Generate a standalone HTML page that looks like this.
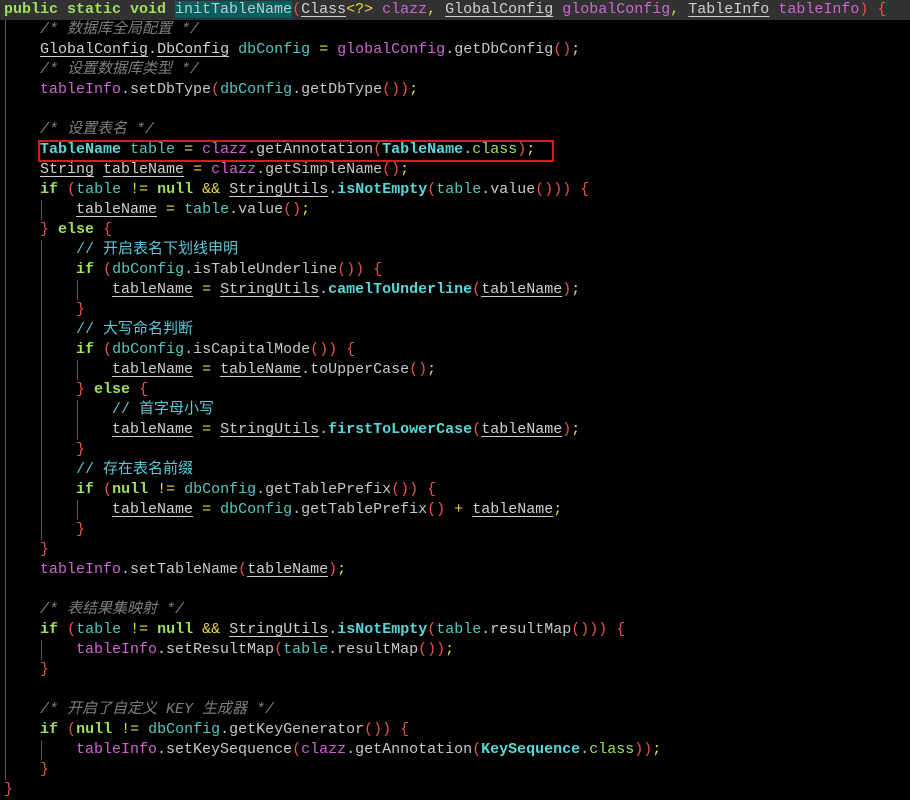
<!DOCTYPE html>
<html><head><meta charset="utf-8"><style>
html,body{margin:0;padding:0;background:#000;width:910px;height:800px;overflow:hidden}
.l{position:absolute;left:4px;height:20px;line-height:20px;white-space:pre;font-family:"Liberation Mono","Noto Sans CJK SC",monospace;font-size:15px;color:#c8c8c8}
.k{color:#9fe05a;font-weight:bold}
.c{color:#7f7f7f;font-style:italic}
.lc{color:#5cc8d8}
.v{color:#52c8c0}
.p{color:#d064d4}
.u{color:#d0d0d0;text-decoration:underline;text-underline-offset:3px}
.t{color:#58d8d8;font-weight:bold}
.r{color:#e8524a}
.y{color:#e8d84a}
.g{position:absolute;width:1px;background:#555}
</style></head><body>
<div style="position:absolute;left:0;top:0;width:910px;height:20px;background:#323232"></div>
<div class="g" style="left:5px;top:20px;height:760px"></div>
<div class="g" style="left:41px;top:200px;height:20px"></div>
<div class="g" style="left:41px;top:240px;height:300px"></div>
<div class="g" style="left:41px;top:640px;height:20px"></div>
<div class="g" style="left:41px;top:740px;height:20px"></div>
<div class="g" style="left:77px;top:280px;height:20px"></div>
<div class="g" style="left:77px;top:360px;height:20px"></div>
<div class="g" style="left:77px;top:400px;height:40px"></div>
<div class="g" style="left:77px;top:500px;height:20px"></div>
<div style="position:absolute;left:38px;top:140px;width:512px;height:18px;border:2px solid #e01818"></div>

<div class="l" style="top:0"><span class="k">public static void </span><span style="background:#006060">initTableName</span><span class="r">(</span><span class="u">Class</span><span class="y">&lt;?&gt;</span> <span class="p">clazz</span><span class="y">,</span> <span class="u">GlobalConfig</span> <span class="p">globalConfig</span><span class="y">,</span> <span class="u">TableInfo</span> <span class="p">tableInfo</span><span class="r">) {</span></div>
<div class="l c" style="top:20px">    /* 数据库全局配置 */</div>
<div class="l" style="top:40px">    <span class="u">GlobalConfig</span>.<span class="u">DbConfig</span> <span class="v">dbConfig</span> <span class="y">=</span> <span class="p">globalConfig</span>.getDbConfig<span class="r">()</span><span class="y">;</span></div>
<div class="l c" style="top:60px">    /* 设置数据库类型 */</div>
<div class="l" style="top:80px">    <span class="p">tableInfo</span>.setDbType<span class="r">(</span><span class="v">dbConfig</span>.getDbType<span class="r">())</span><span class="y">;</span></div>
<div class="l c" style="top:120px">    /* 设置表名 */</div>
<div class="l" style="top:140px">    <span class="t">TableName</span> <span class="v">table</span> <span class="y">=</span> <span class="p">clazz</span>.getAnnotation<span class="r">(</span><span class="t">TableName</span>.<span class="k" style="font-weight:normal">class</span><span class="r">)</span><span class="y">;</span></div>
<div class="l" style="top:160px">    <span class="u">String</span> <span class="u">tableName</span> <span class="y">=</span> <span class="p">clazz</span>.getSimpleName<span class="r">()</span><span class="y">;</span></div>
<div class="l" style="top:180px">    <span class="k">if</span> <span class="r">(</span><span class="v">table</span> <span class="y">!=</span> <span class="k">null</span> <span class="y">&amp;&amp;</span> <span class="u">StringUtils</span>.<span class="t">isNotEmpty</span><span class="r">(</span><span class="v">table</span>.value<span class="r">())) {</span></div>
<div class="l" style="top:200px">        <span class="u">tableName</span> <span class="y">=</span> <span class="v">table</span>.value<span class="r">()</span><span class="y">;</span></div>
<div class="l" style="top:220px">    <span class="r">}</span> <span class="k">else</span> <span class="r">{</span></div>
<div class="l lc" style="top:240px">        // 开启表名下划线申明</div>
<div class="l" style="top:260px">        <span class="k">if</span> <span class="r">(</span><span class="v">dbConfig</span>.isTableUnderline<span class="r">()) {</span></div>
<div class="l" style="top:280px">            <span class="u">tableName</span> <span class="y">=</span> <span class="u">StringUtils</span>.<span class="t">camelToUnderline</span><span class="r">(</span><span class="u">tableName</span><span class="r">)</span><span class="y">;</span></div>
<div class="l" style="top:300px">        <span class="r">}</span></div>
<div class="l lc" style="top:320px">        // 大写命名判断</div>
<div class="l" style="top:340px">        <span class="k">if</span> <span class="r">(</span><span class="v">dbConfig</span>.isCapitalMode<span class="r">()) {</span></div>
<div class="l" style="top:360px">            <span class="u">tableName</span> <span class="y">=</span> <span class="u">tableName</span>.toUpperCase<span class="r">()</span><span class="y">;</span></div>
<div class="l" style="top:380px">        <span class="r">}</span> <span class="k">else</span> <span class="r">{</span></div>
<div class="l lc" style="top:400px">            // 首字母小写</div>
<div class="l" style="top:420px">            <span class="u">tableName</span> <span class="y">=</span> <span class="u">StringUtils</span>.<span class="t">firstToLowerCase</span><span class="r">(</span><span class="u">tableName</span><span class="r">)</span><span class="y">;</span></div>
<div class="l" style="top:440px">        <span class="r">}</span></div>
<div class="l lc" style="top:460px">        // 存在表名前缀</div>
<div class="l" style="top:480px">        <span class="k">if</span> <span class="r">(</span><span class="k">null</span> <span class="y">!=</span> <span class="v">dbConfig</span>.getTablePrefix<span class="r">()) {</span></div>
<div class="l" style="top:500px">            <span class="u">tableName</span> <span class="y">=</span> <span class="v">dbConfig</span>.getTablePrefix<span class="r">()</span> <span class="y">+</span> <span class="u">tableName</span><span class="y">;</span></div>
<div class="l" style="top:520px">        <span class="r">}</span></div>
<div class="l" style="top:540px">    <span class="r">}</span></div>
<div class="l" style="top:560px">    <span class="p">tableInfo</span>.setTableName<span class="r">(</span><span class="u">tableName</span><span class="r">)</span><span class="y">;</span></div>
<div class="l c" style="top:600px">    /* 表结果集映射 */</div>
<div class="l" style="top:620px">    <span class="k">if</span> <span class="r">(</span><span class="v">table</span> <span class="y">!=</span> <span class="k">null</span> <span class="y">&amp;&amp;</span> <span class="u">StringUtils</span>.<span class="t">isNotEmpty</span><span class="r">(</span><span class="v">table</span>.resultMap<span class="r">())) {</span></div>
<div class="l" style="top:640px">        <span class="p">tableInfo</span>.setResultMap<span class="r">(</span><span class="v">table</span>.resultMap<span class="r">())</span><span class="y">;</span></div>
<div class="l" style="top:660px">    <span class="r">}</span></div>
<div class="l c" style="top:700px">    /* 开启了自定义 KEY 生成器 */</div>
<div class="l" style="top:720px">    <span class="k">if</span> <span class="r">(</span><span class="k">null</span> <span class="y">!=</span> <span class="v">dbConfig</span>.getKeyGenerator<span class="r">()) {</span></div>
<div class="l" style="top:740px">        <span class="p">tableInfo</span>.setKeySequence<span class="r">(</span><span class="p">clazz</span>.getAnnotation<span class="r">(</span><span class="t">KeySequence</span>.<span class="k" style="font-weight:normal">class</span><span class="r">))</span><span class="y">;</span></div>
<div class="l" style="top:760px">    <span class="r">}</span></div>
<div class="l" style="top:780px"><span class="r">}</span></div>
</body></html>
